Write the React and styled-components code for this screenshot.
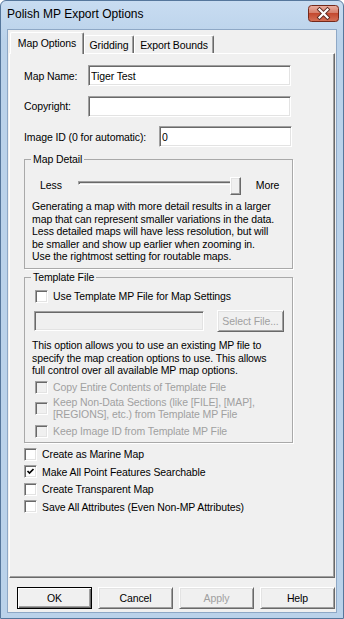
import styled, { createGlobalStyle, css } from "styled-components";

const GlobalStyle = createGlobalStyle`
  html, body {
    margin: 0;
    padding: 0;
    background: #ffffff;
  }
  body {
    font-family: "Liberation Sans", Arial, sans-serif;
    font-size: 10.5px;
    letter-spacing: -0.1px;
    color: #000000;
  }
`;

const sunken = css`
  border: 1px solid;
  border-color: #a0a0a0 #ffffff #ffffff #a0a0a0;
  box-shadow: inset 1px 1px #696969, inset -1px -1px #e3e3e3;
`;

const Window = styled.div`
  box-sizing: border-box;
  width: 344px;
  height: 619px;
  display: flex;
  flex-direction: column;
  border: 1px solid #56779c;
  border-radius: 6px 6px 0 0;
  background: linear-gradient(#c8dcf1, #bad2ea 40px);
`;

const TitleBar = styled.div`
  height: 28px;
  display: flex;
  justify-content: space-between;
  padding: 0 4px 0 6px;
`;

const Title = styled.span`
  font-size: 12px;
  letter-spacing: 0;
  line-height: 28px;
  margin-top: -1px;
`;

const Close = styled.div`
  margin-top: 4px;
  height: 17px;
`;

const Client = styled.div`
  flex: 1;
  margin: 0 6px 5px;
  border: 1px solid #8ea8c6;
  background: #f0f0f0;
  display: flex;
  flex-direction: column;
  padding: 2px 1px 3px;
  min-height: 0;
`;

const TabRow = styled.div`
  height: 21px;
  display: flex;
  align-items: flex-end;
  padding-left: 1px;
`;

const Tab = styled.div`
  box-sizing: border-box;
  width: ${(p) => p.$w}px;
  height: ${(p) => (p.$active ? 22 : 18)}px;
  margin-bottom: ${(p) => (p.$active ? -1 : 0)}px;
  padding-bottom: ${(p) => (p.$active ? 2 : 0)}px;
  position: relative;
  z-index: ${(p) => (p.$active ? 1 : 0)};
  display: flex;
  align-items: center;
  justify-content: center;
  background: #f0f0f0;
  border-left: 1px solid #ffffff;
  border-top: 1px solid #ffffff;
  border-right: 1px solid #696969;
  border-radius: 2px 2px 0 0;
  box-shadow: inset -1px 0 #a0a0a0;
`;

const Panel = styled.div`
  flex: 1;
  border: 1px solid;
  border-color: #ffffff #696969 #696969 #ffffff;
  box-shadow: inset -1px -1px #a0a0a0;
  padding: 11px 0 0 14px;
  display: flex;
  flex-direction: column;
  align-items: flex-start;
`;

const FieldRow = styled.div`
  height: 21px;
  display: flex;
  align-items: center;
  margin-bottom: 9.5px;
`;

const FieldLabel = styled.label`
  width: ${(p) => p.$w}px;
  white-space: nowrap;
`;

const TextInput = styled.input`
  box-sizing: border-box;
  width: ${(p) => p.$w}px;
  height: ${(p) => p.$h || 21}px;
  margin: 0;
  padding: 0 2px;
  font: inherit;
  letter-spacing: inherit;
  color: #000000;
  background: ${(p) => (p.disabled ? "#f0f0f0" : "#ffffff")};
  ${sunken}
  outline: none;
`;

const GroupBox = styled.fieldset`
  box-sizing: border-box;
  width: 269px;
  min-inline-size: 0;
  margin: ${(p) => p.$top}px 0 0;
  padding: 0 0 ${(p) => p.$bottom}px 7px;
  border: 1px solid #a9a9a9;
  box-shadow: 1px 1px 0 #ffffff;
`;

const Legend = styled.legend`
  margin-left: -1px;
  padding: 0 2px;
  line-height: 13px;
`;

const SliderRow = styled.div`
  height: 24px;
  margin-top: 6.5px;
  display: flex;
  align-items: center;
  padding-left: 8px;
`;

const SliderTrack = styled.div`
  position: relative;
  width: 163px;
  height: 24px;
  margin: 0 15px 0 16px;
`;

const TrackLine = styled.div`
  position: absolute;
  left: 0;
  right: 7px;
  top: 8px;
  height: 4px;
  box-sizing: border-box;
  ${sunken}
`;

const Thumb = styled.div`
  position: absolute;
  right: 0;
  top: 4px;
  width: 11px;
  height: 18px;
  box-sizing: border-box;
  background: #f0f0f0;
  border: 1px solid;
  border-color: #ffffff #696969 #696969 #ffffff;
  box-shadow: inset -1px -1px #a0a0a0, inset 1px 1px #e3e3e3;
`;

const Note = styled.p`
  margin: ${(p) => p.$top}px 0 0;
  line-height: 12.5px;
  white-space: nowrap;
`;

const CheckRow = styled.label`
  display: flex;
  align-items: center;
  gap: 5px;
  height: ${(p) => p.$h || 16}px;
  margin-top: ${(p) => p.$top || 0}px;
  padding-left: ${(p) => p.$indent || 0}px;
  color: ${(p) => (p.$disabled ? "#a0a0a0" : "#000000")};
  line-height: 12.5px;
  white-space: nowrap;
`;

const Box = styled.span`
  box-sizing: border-box;
  flex: none;
  width: 13px;
  height: 13px;
  display: flex;
  align-items: center;
  justify-content: center;
  background: ${(p) => (p.$disabled ? "#f0f0f0" : "#ffffff")};
  ${sunken}
`;

const FileRow = styled.div`
  display: flex;
  align-items: center;
  gap: 13px;
  margin-top: 6.5px;
  padding-left: 2px;
`;

const Button = styled.button`
  box-sizing: border-box;
  width: ${(p) => p.$w || 75}px;
  height: 22px;
  margin: 0;
  padding: 0;
  font: inherit;
  letter-spacing: inherit;
  color: ${(p) => (p.disabled ? "#a0a0a0" : "#000000")};
  background: #f0f0f0;
  border: 1px solid;
  border-color: ${(p) =>
    p.$default ? "#000000" : "#ffffff #696969 #696969 #ffffff"};
  box-shadow: ${(p) =>
    p.$default
      ? "inset 1px 1px #ffffff, inset -1px -1px #696969, inset -2px -2px #a0a0a0"
      : "inset 1px 1px #e3e3e3, inset -1px -1px #a0a0a0"};
`;

const ButtonRow = styled.div`
  display: flex;
  gap: 6px;
  margin-top: 9px;
  padding-left: 8px;
`;

function CloseGlyph() {
  return (
    <svg width="31" height="17" viewBox="0 0 31 17">
      <defs>
        <linearGradient id="closeGrad" x1="0" y1="0" x2="0" y2="1">
          <stop offset="0" stopColor="#eab0a3" />
          <stop offset="0.45" stopColor="#d6806c" />
          <stop offset="0.5" stopColor="#c3492f" />
          <stop offset="1" stopColor="#d57258" />
        </linearGradient>
      </defs>
      <rect x="0.5" y="0.5" width="30" height="16" rx="3" fill="url(#closeGrad)" stroke="#74291b" />
      <path d="M11.5 4.5 L19.5 12.5 M19.5 4.5 L11.5 12.5" stroke="#5b2a22" strokeWidth="4" strokeLinecap="square" />
      <path d="M11.5 4.5 L19.5 12.5 M19.5 4.5 L11.5 12.5" stroke="#ffffff" strokeWidth="2.2" strokeLinecap="square" />
    </svg>
  );
}

function Checkbox({ checked, disabled }) {
  return (
    <Box $disabled={disabled}>
      {checked && (
        <svg width="9" height="9" viewBox="0 0 9 9">
          <path d="M1.5 4 L3.5 6 L7.5 2" fill="none" stroke="#000" strokeWidth="1.7" />
        </svg>
      )}
    </Box>
  );
}

function App() {
  return (
    <>
      <GlobalStyle />
      <Window>
        <TitleBar>
          <Title>Polish MP Export Options</Title>
          <Close>
            <CloseGlyph />
          </Close>
        </TitleBar>
        <Client>
          <TabRow>
            <Tab $w={74} $active>Map Options</Tab>
            <Tab $w={50}>Gridding</Tab>
            <Tab $w={80}>Export Bounds</Tab>
          </TabRow>
          <Panel>
            <FieldRow>
              <FieldLabel $w={64}>Map Name:</FieldLabel>
              <TextInput $w={203} defaultValue="Tiger Test" />
            </FieldRow>
            <FieldRow>
              <FieldLabel $w={64}>Copyright:</FieldLabel>
              <TextInput $w={203} defaultValue="" />
            </FieldRow>
            <FieldRow>
              <FieldLabel $w={135}>Image ID (0 for automatic):</FieldLabel>
              <TextInput $w={133} defaultValue="0" />
            </FieldRow>

            <GroupBox $top={-3.5} $bottom={5}>
              <Legend>Map Detail</Legend>
              <SliderRow>
                <span>Less</span>
                <SliderTrack>
                  <TrackLine />
                  <Thumb />
                </SliderTrack>
                <span>More</span>
              </SliderRow>
              <Note $top={3.5}>
                Generating a map with more detail results in a larger
                <br />
                map that can represent smaller variations in the data.
                <br />
                Less detailed maps will have less resolution, but will
                <br />
                be smaller and show up earlier when zooming in.
                <br />
                Use the rightmost setting for routable maps.
              </Note>
            </GroupBox>

            <GroupBox $top={2.5} $bottom={3}>
              <Legend>Template File</Legend>
              <CheckRow $h={13} $top={6} $indent={3}>
                <Checkbox />
                Use Template MP File for Map Settings
              </CheckRow>
              <FileRow>
                <TextInput $w={170} $h={20} disabled defaultValue="" />
                <Button $w={67} disabled>Select File...</Button>
              </FileRow>
              <Note $top={7.5}>
                This option allows you to use an existing MP file to
                <br />
                specify the map creation options to use. This allows
                <br />
                full control over all available MP map options.
              </Note>
              <CheckRow $top={2.5} $indent={3} $disabled>
                <Checkbox disabled />
                Copy Entire Contents of Template File
              </CheckRow>
              <CheckRow $h={26} $indent={3} $disabled>
                <Checkbox disabled />
                <span>
                  Keep Non-Data Sections (like [FILE], [MAP],
                  <br />
                  [REGIONS], etc.) from Template MP File
                </span>
              </CheckRow>
              <CheckRow $top={2} $indent={3} $disabled>
                <Checkbox disabled />
                Keep Image ID from Template MP File
              </CheckRow>
            </GroupBox>

            <CheckRow $h={17.5} $top={2.5}>
              <Checkbox />
              Create as Marine Map
            </CheckRow>
            <CheckRow $h={17.5}>
              <Checkbox checked />
              Make All Point Features Searchable
            </CheckRow>
            <CheckRow $h={17.5}>
              <Checkbox />
              Create Transparent Map
            </CheckRow>
            <CheckRow $h={17.5}>
              <Checkbox />
              Save All Attributes (Even Non-MP Attributes)
            </CheckRow>
          </Panel>
          <ButtonRow>
            <Button $default>OK</Button>
            <Button>Cancel</Button>
            <Button disabled>Apply</Button>
            <Button>Help</Button>
          </ButtonRow>
        </Client>
      </Window>
    </>
  );
}

export default App;
